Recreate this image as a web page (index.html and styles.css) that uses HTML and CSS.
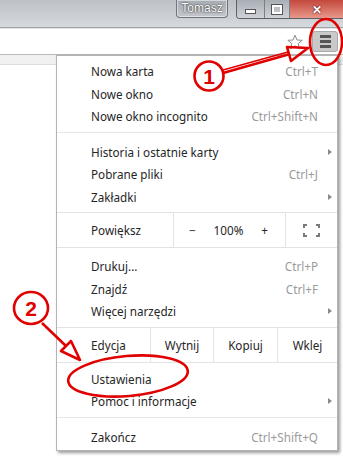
FILE: index.html
```html
<!DOCTYPE html>
<html lang="pl">
  <head>
    <meta charset="UTF-8" />
    <meta name="viewport" content="width=device-width, initial-scale=1.0" />
    <title>Menu Chrome</title>
    <link rel="stylesheet" href="styles.css">
  </head>
  <body>
    <div class="titlebar">
      <div class="user">Tomasz</div>
      <div class="winbtns">
        <div class="wb wb-min"><span class="min-bar"></span></div>
        <div class="wb wb-max"><span class="max-box"></span></div>
        <div class="wb wb-close">&#x2715;</div>
      </div>
    </div>

    <div class="toolbar">
      <svg class="star" width="16" height="16" viewBox="0 0 16 16">
        <path d="M8 1.2 L10 6 L15.2 6.3 L11.2 9.6 L12.5 14.7 L8 11.9 L3.5 14.7 L4.8 9.6 L0.8 6.3 L6 6 Z" fill="#fff" stroke="#8c8c8c" stroke-width="1" stroke-linejoin="round" />
      </svg>
      <div class="menu-btn">
        <span></span><span></span><span></span>
      </div>
    </div>

    <div class="page">
      <div class="strip"></div>

      <div class="menu">
        <div class="item">Nowa karta <span class="key">Ctrl+T</span></div>
        <div class="item">Nowe okno <span class="key">Ctrl+N</span></div>
        <div class="item">Nowe okno incognito <span class="key">Ctrl+Shift+N</span></div>
        <div class="sep"></div>
        <div class="item sub">Historia i ostatnie karty <span class="arrow"></span></div>
        <div class="item">Pobrane pliki <span class="key">Ctrl+J</span></div>
        <div class="item sub">Zakładki <span class="arrow"></span></div>

        <div class="zoom-row">
          <div class="cell label">Powiększ</div>
          <div class="cell zoom-ctrl">
            <span>&minus;</span><span>100%</span><span>+</span>
          </div>
          <div class="cell full">
            <svg width="17" height="13" viewBox="0 0 17 13">
              <path d="M1 4 V1 H4 M13 1 H16 V4 M16 9 V12 H13 M4 12 H1 V9" fill="none" stroke="#7a7a7a" stroke-width="2" />
            </svg>
          </div>
        </div>

        <div class="item">Drukuj... <span class="key">Ctrl+P</span></div>
        <div class="item">Znajdź <span class="key">Ctrl+F</span></div>
        <div class="item sub">Więcej narzędzi <span class="arrow"></span></div>

        <div class="edit-row">
          <div class="cell label">Edycja</div>
          <div class="cell">Wytnij</div>
          <div class="cell">Kopiuj</div>
          <div class="cell">Wklej</div>
        </div>

        <div class="item">Ustawienia</div>
        <div class="item sub">Pomoc i informacje <span class="arrow"></span></div>
        <div class="sep"></div>
        <div class="item">Zakończ <span class="key">Ctrl+Shift+Q</span></div>
      </div>
    </div>

    <!-- red hand-drawn notes on top of the screenshot -->
    <svg class="notes" width="343" height="473" viewBox="0 0 343 473">
      <g fill="none" stroke="#e00000" stroke-width="2.6" stroke-linejoin="round">
        <ellipse cx="326" cy="42" rx="16" ry="23" />
        <circle cx="209" cy="76" r="14.5" />
        <line x1="223" y1="73" x2="290" y2="54" />
        <line x1="223" y1="70" x2="288" y2="52" stroke-width="1.6" />
        <path d="M308 48 L291 61 L287 47 Z" />
        <ellipse cx="31" cy="308" rx="17" ry="16" />
        <line x1="42" y1="323" x2="66" y2="346" />
        <path d="M80 360 L71 341 L61 351 Z" />
        <ellipse cx="128" cy="376" rx="60" ry="20" transform="rotate(-5 128 376)" />
      </g>
      <text x="209" y="84" class="num">1</text>
      <text x="31" y="316" class="num">2</text>
    </svg>
  </body>
</html>
```

FILE: styles.css
```css
* {
  margin: 0;
  padding: 0;
  box-sizing: border-box;
}
body {
  font-family: "Noto Sans", Arial, sans-serif;
  font-size: 11.7px;
  color: #262626;
  background-color: #fff;
  width: 343px;
  height: 473px;
  overflow: hidden;
  position: relative;
}
.titlebar {
  height: 28px;
  background: linear-gradient(#bcc1c7, #d6d9dd);
  border-bottom: 1px solid #9ea3a8;
  display: flex;
  justify-content: flex-end;
  align-items: flex-start;
}
.user {
  width: 52px;
  height: 18px;
  margin-right: 8px;
  border: 1px solid #6f747a;
  border-top: none;
  border-radius: 0 0 4px 4px;
  background: linear-gradient(#a7acb2, #c3c7cc);
  box-shadow: inset 0 0 0 1px rgba(255, 255, 255, 0.5);
  color: #fff;
  font-family: "Liberation Sans", Arial, sans-serif;
  font-size: 12px;
  text-align: center;
  line-height: 16px;
  text-shadow: 0 0 2px #333, 0 0 1px #333;
}
.winbtns {
  display: flex;
  height: 19px;
  border: 1px solid #5c6168;
  border-top: none;
  border-right: none;
  border-radius: 0 0 0 4px;
  overflow: hidden;
}
.wb {
  height: 18px;
  display: flex;
  align-items: center;
  justify-content: center;
}
.wb-min,
.wb-max {
  width: 28px;
  background: linear-gradient(#a9aeb5, #cfd3d8);
  border-right: 1px solid #7b8087;
}
.wb-max {
  width: 25px;
}
.min-bar {
  width: 11px;
  height: 5px;
  background-color: #fff;
  border: 1px solid #555;
  margin-top: 5px;
}
.max-box {
  width: 10px;
  height: 9px;
  border: 2px solid #fff;
  outline: 1px solid #555;
}
.wb-close {
  width: 53px;
  background: linear-gradient(#c4473c, #e7998a);
  color: #fff;
  font-size: 12px;
  font-weight: bold;
  text-shadow: 0 0 2px #611, 0 0 1px #611;
}
.toolbar {
  height: 27px;
  background-color: #fff;
  border-top: 1px solid #e4e4e4;
  border-bottom: 1px solid #b9b9b9;
  display: flex;
  justify-content: flex-end;
  align-items: center;
  padding-right: 5px;
}
.star {
  margin-right: 9px;
}
.menu-btn {
  width: 26px;
  height: 21px;
  background-color: #c9c9c9;
  border: 1px solid #a9a9a9;
  border-radius: 3px;
  display: flex;
  flex-direction: column;
  align-items: center;
  justify-content: center;
  gap: 2px;
}
.menu-btn span {
  width: 11px;
  height: 3px;
  background-color: #555;
}
.page {
  position: relative;
}
.strip {
  height: 10px;
  background-color: #f1f1f1;
  border-bottom: 1px solid #dedede;
}
.menu {
  position: absolute;
  top: 0;
  left: 56px;
  width: 282px;
  background-color: #fff;
  border: 1px solid #b4b4b4;
  box-shadow: 2px 2px 3px rgba(0, 0, 0, 0.4);
  padding: 4px 0 2px;
}
.item {
  height: 22.5px;
  display: flex;
  align-items: center;
  padding: 0 19px 0 34px;
  white-space: nowrap;
}
.item.sub {
  padding-right: 5px;
}
.key {
  margin-left: auto;
  color: #9a9a9a;
}
.arrow {
  margin-left: auto;
  width: 0;
  height: 0;
  border-top: 3.5px solid transparent;
  border-bottom: 3.5px solid transparent;
  border-left: 4px solid #8a8a8a;
}
.sep {
  border-top: 1px solid #e6e6e6;
  margin: 4px 0 8px;
}
.zoom-row,
.edit-row {
  display: grid;
  border-top: 1px solid #e3e3e3;
  border-bottom: 1px solid #e3e3e3;
  height: 36px;
}
.zoom-row {
  grid-template-columns: 116px 112px 1fr;
  margin: 4px 0 7px;
}
.edit-row {
  grid-template-columns: 93px 63px 64px 1fr;
  margin: 4px 0 5px;
}
.cell {
  display: flex;
  align-items: center;
  justify-content: center;
  border-left: 1px solid #e3e3e3;
}
.cell.label {
  justify-content: flex-start;
  padding-left: 34px;
  border-left: none;
}
.zoom-ctrl {
  justify-content: space-between;
  padding: 0 17px 0 15px;
}
.notes {
  position: absolute;
  top: 0;
  left: 0;
  pointer-events: none;
}
.num {
  fill: #e00000;
  font-family: "Liberation Sans", Arial, sans-serif;
  font-size: 21px;
  font-weight: bold;
  text-anchor: middle;
}
```
